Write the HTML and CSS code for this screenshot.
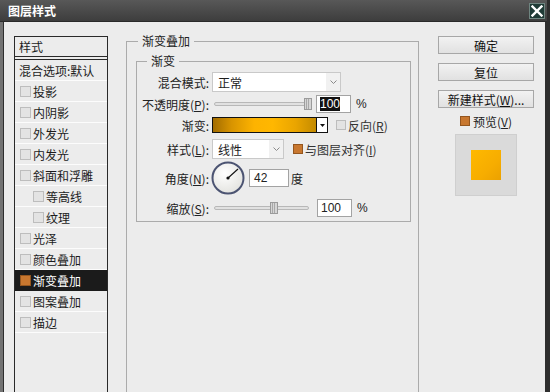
FILE: index.html
```html
<!DOCTYPE html>
<html>
<head>
<meta charset="utf-8">
<link rel="stylesheet" href="styles.css">
</head>
<body>
<div class="dialog">
  <div class="titlebar">
    <span class="title">图层样式</span>
    <span class="close"><svg width="12" height="12" viewBox="0 0 12 12"><path d="M1.5 1.5 L10.5 10.5 M10.5 1.5 L1.5 10.5" stroke="#fff" stroke-width="2.4" stroke-linecap="square"/></svg></span>
  </div>
  <div class="main">
    <div class="list">
      <div class="list-head">样式</div>
      <div class="item plain">混合选项:默认</div>
      <div class="item"><i class="cb"></i>投影</div>
      <div class="item"><i class="cb"></i>内阴影</div>
      <div class="item"><i class="cb"></i>外发光</div>
      <div class="item"><i class="cb"></i>内发光</div>
      <div class="item"><i class="cb"></i>斜面和浮雕</div>
      <div class="item sub"><i class="cb"></i>等高线</div>
      <div class="item sub"><i class="cb"></i>纹理</div>
      <div class="item"><i class="cb"></i>光泽</div>
      <div class="item"><i class="cb"></i>颜色叠加</div>
      <div class="item active"><i class="cb on"></i>渐变叠加</div>
      <div class="item"><i class="cb"></i>图案叠加</div>
      <div class="item"><i class="cb"></i>描边</div>
    </div>

    <fieldset class="group outer">
      <legend>渐变叠加</legend>
      <fieldset class="group inner">
        <legend>渐变</legend>
        <div class="row r1">
          <span class="label">混合模式:</span>
          <div class="select w129"><span class="val">正常</span><span class="arrow"><svg width="7" height="4" viewBox="0 0 7 4"><path d="M0.5 0.5 L3.5 3.5 L6.5 0.5" fill="none" stroke="#8a8a8a"/></svg></span></div>
        </div>
        <div class="row r2">
          <span class="label">不透明度(<u>P</u>):</span>
          <div class="slider w98"><div class="thumb" style="left:89px"></div></div>
          <div class="num ml4"><span class="sel">100</span></div>
          <span class="unit">%</span>
        </div>
        <div class="row r3">
          <span class="label">渐变:</span>
          <div class="grad"><div class="grad-fill"></div><div class="grad-btn"><svg width="5" height="3" viewBox="0 0 5 3"><path d="M0 0 H5 L2.5 3 Z" fill="#111"/></svg></div></div>
          <i class="cb ml8"></i><span class="opt">反向(<u>R</u>)</span>
        </div>
        <div class="row r4">
          <span class="label">样式(<u>L</u>):</span>
          <div class="select w72"><span class="val">线性</span><span class="arrow"><svg width="7" height="4" viewBox="0 0 7 4"><path d="M0.5 0.5 L3.5 3.5 L6.5 0.5" fill="none" stroke="#8a8a8a"/></svg></span></div>
          <i class="cb on ml9"></i><span class="opt">与图层对齐(<u>I</u>)</span>
        </div>
        <div class="row r5">
          <span class="label">角度(<u>N</u>):</span>
          <svg class="dial" width="34" height="34" viewBox="0 0 34 34">
            <defs><radialGradient id="dg" cx="0.4" cy="0.35" r="0.7"><stop offset="0" stop-color="#ffffff"/><stop offset="1" stop-color="#e2e2de"/></radialGradient></defs>
            <circle cx="17" cy="17" r="15.5" fill="url(#dg)" stroke="#4c5472" stroke-width="2"/>
            <line x1="17" y1="17" x2="27" y2="8" stroke="#111" stroke-width="1.1"/>
            <circle cx="17" cy="17" r="1.6" fill="#111"/>
          </svg>
          <div class="num w40 ml4">42</div>
          <span class="unit u2">度</span>
        </div>
        <div class="row r6">
          <span class="label">缩放(<u>S</u>):</span>
          <div class="slider w95"><div class="thumb" style="left:55px"></div></div>
          <div class="num ml8">100</div>
          <span class="unit">%</span>
        </div>
      </fieldset>
    </fieldset>

    <div class="side">
      <div class="btn">确定</div>
      <div class="btn">复位</div>
      <div class="btn">新建样式(<u>W</u>)...</div>
      <div class="preview-row"><i class="cb on"></i>预览(<u>V</u>)</div>
      <div class="preview"><div class="swatch"></div></div>
    </div>
  </div>
</div>
</body>
</html>
```
FILE: styles.css
```css
* { box-sizing: border-box; }
html, body { margin: 0; padding: 0; }
body {
  width: 550px;
  height: 392px;
  overflow: hidden;
  background: #2e2e2e;
  font-family: "Noto Sans CJK SC", "Noto Sans", sans-serif;
  font-size: 12px;
  color: #1c1c1c;
}
.dialog {
  width: 547px;
  height: 392px;
  display: flex;
  flex-direction: column;
  overflow: hidden;
}
.titlebar {
  height: 22px;
  flex: none;
  display: flex;
  align-items: center;
  justify-content: space-between;
  padding: 0 2px 0 8px;
  background: linear-gradient(#585858, #3d3d3d);
  border-bottom: 1px solid #2a2a2a;
}
.title {
  color: #fff;
  font-weight: bold;
  font-size: 12px;
  line-height: 14px;
}
.close {
  width: 16px;
  height: 16px;
  display: flex;
  align-items: center;
  justify-content: center;
  background: #1f3b36;
  border: 1px solid #6f8580;
}
.main {
  flex: 1;
  min-height: 0;
  width: 545px;
  display: flex;
  align-items: flex-start;
  padding: 11px 0 0 11px;
  background: #ececec;
  border-left: 3px solid #737373;
  box-shadow: inset 1px 0 0 #2f2f2f;
  overflow: hidden;
}

/* left list */
.list {
  width: 94px;
  height: 360px;
  flex: none;
  margin-top: 3px;
  border: 1px solid #2a2a2a;
  border-bottom: none;
  background: #ececec;
}
.list-head {
  height: 23px;
  padding: 1px 0 0 4px;
  border-bottom: 4px double #2a2a2a;
  line-height: 17px;
}
.item {
  height: 21px;
  display: flex;
  align-items: center;
  padding-left: 5px;
  border-bottom: 1px solid #fcfcfc;
  white-space: nowrap;
}
.item.plain { padding-left: 4px; }
.item.sub { padding-left: 18px; }
.item.active {
  background: #1b1b1b;
  color: #fff;
  border-bottom-color: #1b1b1b;
}
.cb {
  display: inline-block;
  width: 11px;
  height: 11px;
  flex: none;
  margin-right: 2px;
  background: #e3e3e3;
  border: 1px solid #bdbdbd;
}
.cb.on {
  background: #c8772f;
  border-color: #94561f;
}

/* fieldsets */
.group {
  margin: 0;
  padding: 0;
  min-width: 0;
  border: 1px solid #ababab;
}
.group legend {
  padding: 0 4px;
  line-height: 16px;
  font-size: 12px;
  color: #222;
}
.outer {
  width: 293px;
  height: 366px;
  margin-left: 18px;
  border-bottom: none;
}
.outer > legend { margin-left: 11px; }
.inner {
  margin: 4px 7px 0 9px;
  padding: 3px 0 3px 0;
}
.inner > legend { margin-left: 10px; }

.row {
  display: flex;
  align-items: center;
  white-space: nowrap;
}
.label {
  width: 72px;
  margin-right: 3px;
  text-align: right;
  color: #222;
}
.r1 { height: 20px; }
.r2 { height: 22px; margin-top: 1px; }
.r3 { height: 20px; }
.r4 { height: 20px; margin-top: 4px; }
.r5 { height: 34px; margin-top: 2px; }
.r6 { height: 20px; margin-top: 3px; }

.select {
  display: flex;
  height: 20px;
  background: #fff;
  border: 1px solid #c9c9c9;
}
.w129 { width: 129px; }
.w72 { width: 72px; }
.val {
  flex: 1;
  display: flex;
  align-items: center;
  padding-left: 5px;
}
.arrow {
  width: 14px;
  display: flex;
  align-items: center;
  justify-content: center;
  background: #f1f1f1;
}

.slider {
  position: relative;
  height: 4px;
  margin-left: 2px;
  background: #e1e1e1;
  border: 1px solid #b8b8b8;
  border-radius: 2px;
}
.w98 { width: 98px; }
.w95 { width: 95px; }
.thumb {
  position: absolute;
  top: -5px;
  width: 8px;
  height: 12px;
  border: 1px solid #9b9b9b;
  background: linear-gradient(90deg, #d6d6d6 0 1px, #a8a8a8 1px 2px, #d6d6d6 2px 3px, #a8a8a8 3px 4px, #d6d6d6 4px);
}

.num {
  width: 35px;
  height: 18px;
  display: flex;
  align-items: center;
  padding-left: 3px;
  background: #fff;
  border: 1px solid #a3a3a3;
  font-family: "Liberation Sans", Arial, sans-serif;
  font-size: 12px;
  color: #222;
}
.w40 { width: 40px; padding-left: 4px; }
.sel {
  background: #111;
  color: #fff;
  line-height: 14px;
}
.ml4 { margin-left: 4px; }
.ml8 { margin-left: 8px; }
.ml9 { margin-left: 9px; }
.unit {
  margin-left: 5px;
  font-family: "Liberation Sans", Arial, sans-serif;
  font-size: 12px;
  color: #222;
}
.unit.u2 {
  margin-left: 2px;
  font-family: "Noto Sans CJK SC", sans-serif;
}
.opt { color: #333; }
.row .cb { width: 10px; height: 10px; }

.grad {
  width: 116px;
  height: 16px;
  display: flex;
  border: 1px solid #111;
}
.grad-fill {
  flex: 1;
  background: linear-gradient(90deg, #a26c00 0%, #d89400 18%, #fdb300 40%, #ffb700 58%, #eaa500 80%, #c48b00 100%);
}
.grad-btn {
  width: 11px;
  display: flex;
  align-items: center;
  justify-content: center;
  background: #fff;
  border-left: 1px solid #111;
}
.dial { margin-left: -1px; flex: none; }

/* right column */
.side {
  width: 96px;
  margin: 3px 0 0 19px;
  display: flex;
  flex-direction: column;
  align-items: center;
}
.btn {
  width: 96px;
  height: 18px;
  margin-bottom: 9px;
  display: flex;
  align-items: center;
  justify-content: center;
  border: 1px solid #a7a7a7;
  background: linear-gradient(#f2f2f2, #e1e1e1);
  color: #111;
  white-space: nowrap;
}
.preview-row {
  height: 14px;
  margin-top: -3px;
  display: flex;
  align-items: center;
  color: #222;
}
.preview-row .cb { width: 10px; height: 10px; margin-right: 3px; }
.preview {
  width: 62px;
  height: 62px;
  margin-top: 6px;
  display: flex;
  align-items: center;
  justify-content: center;
  background: #dadada;
  border: 1px solid #cfcfcf;
}
.swatch {
  width: 30px;
  height: 30px;
  background: linear-gradient(135deg, #ffb900 0%, #f7ad00 60%, #eba100 100%);
}
```
